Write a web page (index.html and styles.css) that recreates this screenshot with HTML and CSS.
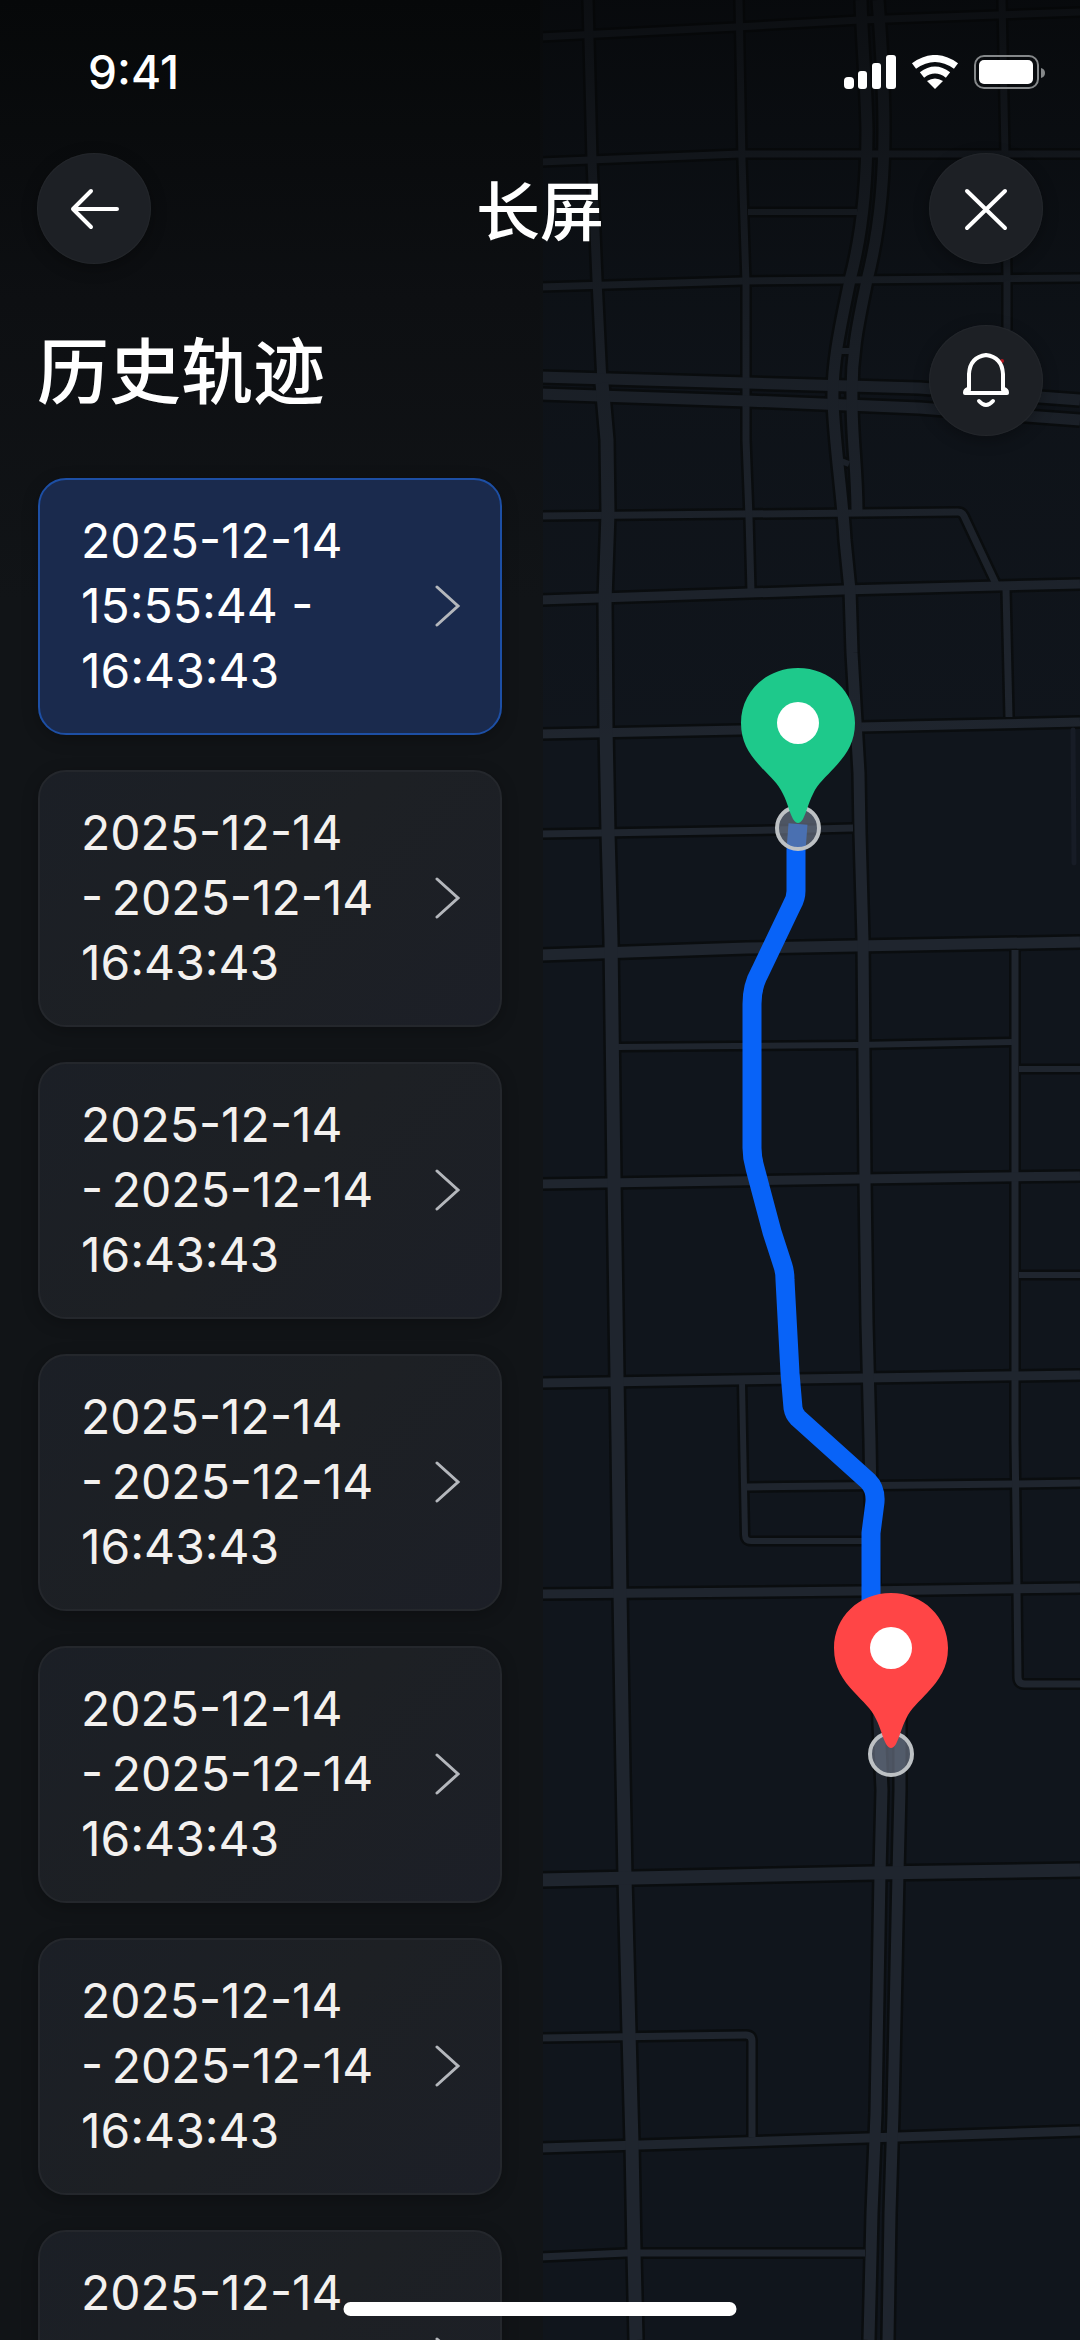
FILE: index.html
```html
<!DOCTYPE html>
<html lang="zh-CN">

<head>
    <meta charset="UTF-8">
    <meta name="viewport" content="width=device-width, initial-scale=1.0">
    <title>历史轨迹</title>
    <link rel="stylesheet" href="styles.css">
</head>

<body>
    <div class="screen">
        <!-- 地图 -->
        <svg class="map" viewBox="540 0 540 2340" preserveAspectRatio="xMidYMid slice" role="img" aria-label="轨迹地图">
            <defs>
                <linearGradient id="fade" x1="0" y1="0" x2="0" y2="1">
                    <stop offset="0" stop-color="#040506" stop-opacity="0.7" />
                    <stop offset="0.5" stop-color="#060809" stop-opacity="0.2" />
                    <stop offset="1" stop-color="#0a0c0e" stop-opacity="0" />
                </linearGradient>
                <path id="pin"
                    d="M0 -55C32 -55 57 -31 57 0C57 20 48 32 37 44C28 54 20 60 15 71C10 81 9 88 5 96Q0 104 -5 96C-9 88 -10 81 -15 71C-20 60 -28 54 -37 44C-48 32 -57 20 -57 0C-57 -31 -32 -55 0 -55Z" />
                <g id="roads">
                    <g class="w6">
                        <path d="M748 212H857" />
                        <path d="M841 351H852" />
                        <path d="M841 461L849 464" />
                        <path d="M618 1047L857 1045L1012 1042" />
                        <path d="M1019 1069H1080" />
                        <path d="M1019 1275H1080" />
                        <path d="M742 1383L745 1535Q745 1541 751 1541H872" />
                    </g>
                    <g class="w7">
                        <path d="M540 37L736 27L860 20L1080 12" />
                        <path d="M540 162L740 154H1080" />
                        <path d="M540 287L743 281L1080 278" />
                        <path d="M540 516L958 512Q962 512 964 516L996 584" />
                        <path d="M540 834L774 830L853 828" />
                        <path d="M747 1487L1012 1484L1080 1483" />
                        <path d="M540 2038L746 2035Q752 2035 752 2041V2137" />
                        <path d="M540 2257L626 2253H865" />
                        <path d="M739 0L742 160L746 283V440L749 517L751 592" />
                        <path d="M1002 0L1005 153L1007 277V330" />
                        <path d="M1006 590L1009 717" />
                        <path d="M1015 950V1440L1017 1590L1018 1677Q1018 1684 1025 1684H1080" />
                    </g>
                    <g class="w9">
                        <path d="M540 600L843 590L998 586L1080 584" />
                        <path d="M540 734L740 730L860 727L1080 722" />
                        <path d="M540 1184L860 1179L1080 1176" />
                        <path d="M540 1383L864 1378L1080 1375" />
                        <path d="M540 1594L860 1591L1080 1588" />
                        <path d="M540 2148L867 2138L1080 2131" />
                        <path d="M588 0L592 160L597 280L602 383L607 440" />
                    </g>
                    <g class="w11">
                        <path d="M540 377L747 383L919 388L1080 400" />
                        <path d="M540 394L747 401L919 408L1080 420" />
                        <path d="M540 955L747 948L1080 942" />
                        <path d="M861 0C862 40 866 80 867 130C867 200 858 250 850 280C843 315 832 360 833 400C834 440 843 500 845 540L850 590L852 653L859 773L860 833L863 940L865 1180L867 1323L870 1440L871 1500L879 1723L882 1790L880 1873L876 2113L872 2213L869 2340" />
                        <path d="M878 0C881 40 884 80 884 130C884 200 876 245 867 280C860 315 851 350 852 400C852 440 857 470 857 512" />
                        <path d="M900 1717V1790L898 1873L893 2113L890 2213L888 2340" />
                    </g>
                    <g class="w13">
                        <path d="M602 383L607 440L608 513L605 600L606 727L608 833L611 940L614 1180L617 1377L618 1440L620 1593L623 1773L625 1877L629 2033L632 2143L634 2253L636 2340" />
                        <path d="M540 1880L874 1873L1080 1870" />
                    </g>
                </g>
            </defs>
            <rect class="land" x="540" width="540" height="2340" />
            <use class="casing" href="#roads" />
            <use class="road" href="#roads" />
            <path class="faint" d="M1073 730L1074 863" />
            <rect class="edge" x="540" width="3" height="2340" />
            <rect x="540" width="540" height="760" fill="url(#fade)" />

            <path class="route"
                d="M798 824L796 850L796 891Q796 898 792 905L760 972Q752 986 752 1004V1148Q752 1158 755 1168L772 1232L783 1266Q785 1272 785 1280L790 1373L793 1408Q794 1414 798 1418L868 1481Q876 1489 875 1502L871 1533V1640" />

            <!-- 起点 -->
            <circle class="stop" cx="798" cy="828" r="21" />
            <use href="#pin" x="798" y="723" fill="#1ec98b" />
            <circle cx="798" cy="723" r="21" fill="#fff" />
            <!-- 终点 -->
            <circle class="stop" cx="891" cy="1754" r="21" />
            <use href="#pin" x="891" y="1648" fill="#ff4546" />
            <circle cx="891" cy="1648" r="21" fill="#fff" />
        </svg>

        <!-- 状态栏 -->
        <div class="status">
            <span class="time">9:41</span>
            <div class="status-icons">
                <svg width="52" height="34" viewBox="0 0 52 34" fill="#fff">
                    <rect x="0" y="22" width="10" height="12" rx="4" />
                    <rect x="14" y="16" width="9" height="18" rx="3" />
                    <rect x="28" y="8" width="9" height="26" rx="3" />
                    <rect x="42" y="0" width="10" height="34" rx="3" />
                </svg>
                <svg width="48" height="34" viewBox="0 0 48 34" fill="none" stroke="#fff" stroke-width="7">
                    <path d="M3 11Q24 -4 45 11" />
                    <path d="M11 20Q24 10 37 20" />
                    <path d="M24 34L16 26Q24 21 32 26Z" fill="#fff" stroke="none" />
                </svg>
                <svg width="71" height="34" viewBox="0 0 71 34">
                    <rect x="1" y="1" width="63" height="32" rx="9" fill="none" stroke="#85888a" stroke-width="2" />
                    <rect x="5" y="5" width="54" height="24" rx="5" fill="#fff" />
                    <path d="M67 13Q71 14 71 18Q71 22 67 23Z" fill="#85888a" />
                </svg>
            </div>
        </div>

        <header class="nav">
            <button class="round" type="button" aria-label="返回">
                <svg width="54" height="54" viewBox="0 0 54 54">
                    <path d="M50 27H6M24 9L6 27L24 45" />
                </svg>
            </button>
            <h1>长屏</h1>
            <button class="round" type="button" aria-label="关闭">
                <svg width="54" height="54" viewBox="0 0 54 54">
                    <path d="M8 9L46 46M46 9L8 46" />
                </svg>
            </button>
        </header>

        <div class="heading">
            <h2>历史轨迹</h2>
            <button class="round" type="button" aria-label="通知">
                <svg width="54" height="54" viewBox="0 0 54 54">
                    <circle cx="43" cy="8" r="2" class="dot" />
                    <path d="M10 37V21Q11 4 27 2Q43 4 44 21V37" />
                    <path d="M9 36Q6 37 6 40H48Q48 37 45 36" />
                    <path d="M20 48Q27 56 34 48" />
                </svg>
            </button>
        </div>

        <!-- 轨迹列表 -->
        <main class="list">
            <button class="card active" type="button">
                <span>2025-12-14<br>15:55:44 -<br>16:43:43</span>
                <svg class="arrow" width="26" height="44" viewBox="0 0 26 44"><path d="M2 3L23 22L2 41" /></svg>
            </button>
            <button class="card" type="button">
                <span>2025-12-14<br>-&thinsp;2025-12-14<br>16:43:43</span>
                <svg class="arrow" width="26" height="44" viewBox="0 0 26 44"><path d="M2 3L23 22L2 41" /></svg>
            </button>
            <button class="card" type="button">
                <span>2025-12-14<br>-&thinsp;2025-12-14<br>16:43:43</span>
                <svg class="arrow" width="26" height="44" viewBox="0 0 26 44"><path d="M2 3L23 22L2 41" /></svg>
            </button>
            <button class="card" type="button">
                <span>2025-12-14<br>-&thinsp;2025-12-14<br>16:43:43</span>
                <svg class="arrow" width="26" height="44" viewBox="0 0 26 44"><path d="M2 3L23 22L2 41" /></svg>
            </button>
            <button class="card" type="button">
                <span>2025-12-14<br>-&thinsp;2025-12-14<br>16:43:43</span>
                <svg class="arrow" width="26" height="44" viewBox="0 0 26 44"><path d="M2 3L23 22L2 41" /></svg>
            </button>
            <button class="card" type="button">
                <span>2025-12-14<br>-&thinsp;2025-12-14<br>16:43:43</span>
                <svg class="arrow" width="26" height="44" viewBox="0 0 26 44"><path d="M2 3L23 22L2 41" /></svg>
            </button>
            <button class="card" type="button">
                <span>2025-12-14<br>-&thinsp;2025-12-14<br>16:43:43</span>
                <svg class="arrow" width="26" height="44" viewBox="0 0 26 44"><path d="M2 3L23 22L2 41" /></svg>
            </button>
        </main>

        <div class="home-bar"></div>
    </div>
</body>

</html>
```
FILE: styles.css
```css
* {
    margin: 0;
    padding: 0;
    box-sizing: border-box;
}

body {
    height: 100vh;
    overflow: hidden;
    background-color: #0f1215;
    color: #fff;
    font-family: Inter, "Noto Sans CJK SC", sans-serif;
}

button {
    border: 0;
    color: inherit;
    font-family: inherit;
    cursor: pointer;
}

svg {
    display: block;
}

.screen {
    position: relative;
    display: grid;
    grid-template-columns: 1fr 1fr;
    grid-template-rows: auto auto auto 1fr;
    height: 100vh;
    overflow: hidden;
    background: linear-gradient(#060809, #0d0f12 300px, #111417 600px, #111417);
}

/* 地图铺满右半边，其它内容叠在上面 */
.map {
    grid-column: 2;
    grid-row: 1 / -1;
    width: 100%;
    height: 100vh;
}

.land {
    fill: #10151c;
}

.edge {
    fill: #111417;
}

.casing,
.road {
    --extra: 0px;
    fill: none;
    stroke-linejoin: round;
}

.casing {
    --extra: 5px;
    stroke: #0a0d0f;
}

.road {
    stroke: #1f252e;
}

.w6 { stroke-width: calc(6px + var(--extra)); }
.w7 { stroke-width: calc(7px + var(--extra)); }
.w9 { stroke-width: calc(9px + var(--extra)); }
.w11 { stroke-width: calc(11px + var(--extra)); }
.w13 { stroke-width: calc(13px + var(--extra)); }

.faint {
    fill: none;
    stroke: #171c26;
    stroke-width: 5px;
    stroke-linecap: round;
}

.route {
    fill: none;
    stroke: #0863f8;
    stroke-width: 19px;
    stroke-linejoin: round;
}

.stop {
    fill: rgba(110, 120, 138, 0.65);
    stroke: #bdc1c4;
    stroke-width: 4px;
}

.status {
    grid-column: 1 / -1;
    grid-row: 1;
    display: flex;
    align-items: center;
    justify-content: space-between;
    padding: 45px 35px 54px 88px;
}

.time {
    font-size: 46px;
    font-weight: 500;
    line-height: 54px;
}

.status-icons {
    display: flex;
    gap: 15px;
}

.nav,
.heading {
    grid-column: 1 / -1;
    display: flex;
    align-items: center;
    justify-content: space-between;
    padding: 0 37px;
}

.nav {
    grid-row: 2;
    margin-bottom: 60px;
}

.heading {
    grid-row: 3;
    margin-bottom: 42px;
}

h1,
h2 {
    font-weight: 500;
}

h1 {
    font-size: 64px;
    line-height: 96px;
    padding-top: 6px;
}

h2 {
    font-size: 72px;
    line-height: 96px;
    padding-bottom: 16px;
}

.round {
    display: flex;
    align-items: center;
    justify-content: center;
    width: 114px;
    height: 111px;
    border-radius: 50%;
    background-color: #1d2025;
    box-shadow: inset 0 0 2px rgba(255, 255, 255, 0.1), 0 4px 16px rgba(0, 0, 0, 0.3);
}

.round path {
    fill: none;
    stroke: #fff;
    stroke-width: 4px;
    stroke-linecap: round;
    stroke-linejoin: round;
}

.dot {
    fill: #b3161f;
}

.list {
    grid-column: 1;
    grid-row: 4;
    display: flex;
    flex-direction: column;
    gap: 35px;
    min-height: 0;
    padding: 0 38px;
}

.card {
    flex: none;
    display: flex;
    align-items: center;
    justify-content: space-between;
    padding: 28px 39px 30px 41px;
    border: 2px solid #24272c;
    border-radius: 28px;
    background: linear-gradient(135deg, #1b1f26, #1d2024 50%, #1c1f27);
    box-shadow: 0 4px 16px rgba(0, 0, 0, 0.25);
    color: #f3f1ef;
    font-size: 48px;
    line-height: 65px;
    text-align: left;
}

.card.active {
    border-color: #1d4fa5;
    background: #1a2a4d;
    color: #fff;
}

.arrow path {
    fill: none;
    stroke: #b4b7bc;
    stroke-width: 3px;
    stroke-linecap: round;
}

.home-bar {
    position: absolute;
    left: 50%;
    bottom: 24px;
    width: 393px;
    height: 14px;
    border-radius: 7px;
    background-color: #fff;
    transform: translateX(-50%);
}
```
